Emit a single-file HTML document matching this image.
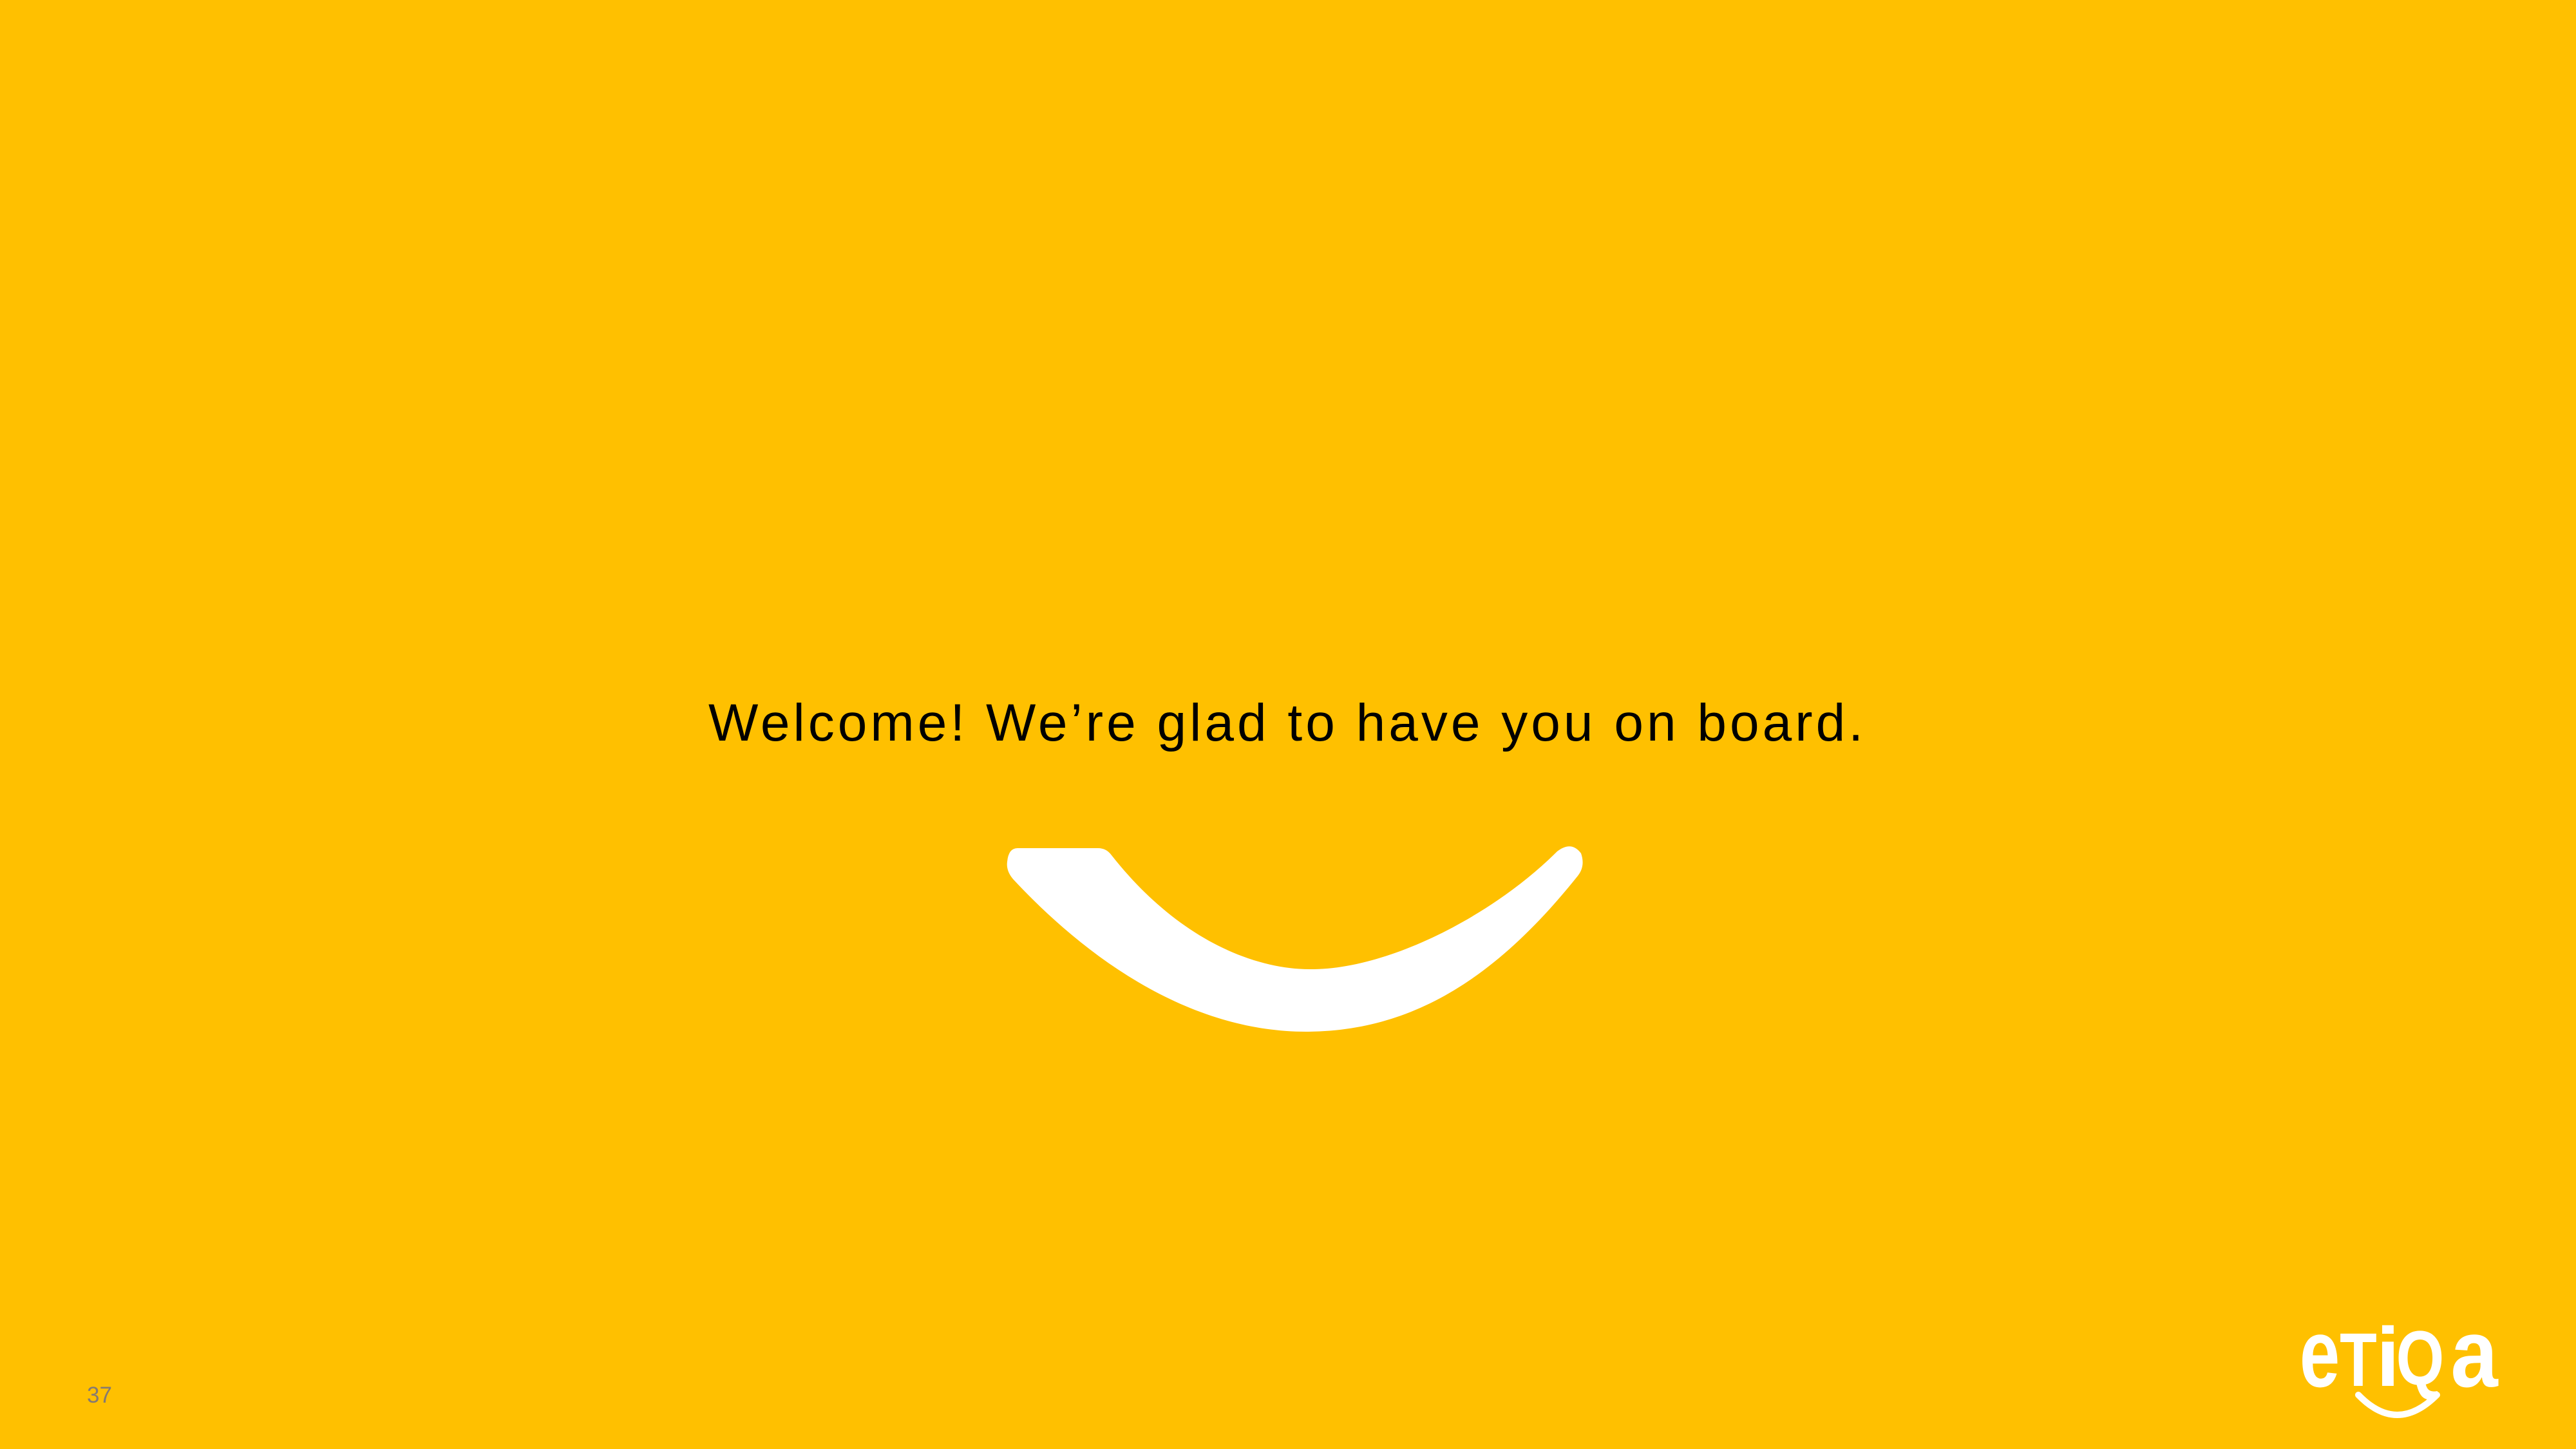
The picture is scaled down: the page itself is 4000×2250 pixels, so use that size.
<!DOCTYPE html>
<html><head><meta charset="utf-8">
<style>
html,body{margin:0;padding:0;}
body{width:4000px;height:2250px;background:#FFC000;overflow:hidden;position:relative;}
svg{position:absolute;left:0;top:0;}
</style></head>
<body>
<svg width="4000" height="2250" viewBox="0 0 4000 2250" xmlns="http://www.w3.org/2000/svg">
  <text x="1100" y="1150" font-family="Liberation Sans, Arial, sans-serif" font-size="82" fill="#000" textLength="1793" lengthAdjust="spacing">Welcome! We’re glad to have you on board.</text>
  <path fill="#fff" d="M1580,1317 L1705,1317 Q1718,1317 1726,1328 C1830,1460 1950,1507 2041,1505 C2160,1503 2320,1420 2418,1322 Q2440,1305 2455,1325 Q2462,1345 2450,1360 C2330,1510 2200,1602 2028,1602 C1840,1602 1680,1480 1573,1365 Q1562,1352 1564,1338 Q1566,1317 1580,1317 Z"/>
  <text x="135" y="2178" font-family="Liberation Sans, Arial, sans-serif" font-size="35" fill="#857a72">37</text>
  <g font-family="Liberation Sans, Arial, sans-serif" font-weight="bold" fill="#fff" text-anchor="middle">
    <text transform="translate(3602,2153) scale(0.75,1)" font-size="150">e</text>
    <text transform="translate(3662,2152) scale(0.8,1)" font-size="118">T</text>
    <text transform="translate(3708,2152) scale(1,1)" font-size="130">i</text>
    <text transform="translate(3758,2150) scale(0.8,1)" font-size="120">Q</text>
    <text transform="translate(3842,2153) scale(0.88,1)" font-size="150">a</text>
  </g>
  <path d="M3662,2166 Q3722,2228 3784,2166" stroke="#fff" stroke-width="10" fill="none" stroke-linecap="round"/>
</svg>
</body></html>
